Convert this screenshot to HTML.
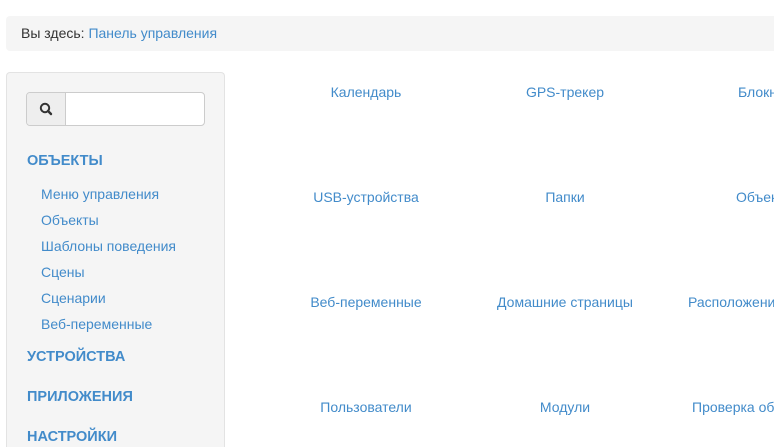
<!DOCTYPE html>
<html><head><meta charset="utf-8"><style>
html,body{margin:0;width:774px;height:447px;overflow:hidden}
body{background:#fff;font-family:"Liberation Sans",Arial,sans-serif;font-size:14px;color:#333;position:relative}
a{color:#428bca;text-decoration:none}
.bc{position:absolute;left:6px;top:16px;width:768px;height:35px;background:#f5f5f5;border-radius:4px 0 0 4px;line-height:35px;padding-left:15px;box-sizing:border-box}
.sb{position:absolute;left:6px;top:72px;width:219px;height:375px;background:#f5f5f5;border:1px solid #e3e3e3;border-bottom:none;box-sizing:border-box;border-radius:4px 4px 0 0}
.ig{position:absolute;left:26px;top:92px;width:179px;height:34px;border:1px solid #ccc;border-radius:4px;background:#fff;box-sizing:border-box}
.ig .ad{position:absolute;left:0;top:0;width:38px;height:32px;background:#eee;border-right:1px solid #ccc;border-radius:3px 0 0 3px}
.h{position:absolute;left:27px;font-weight:bold;color:#428bca;font-size:14.5px}
.s{position:absolute;left:41px;color:#428bca}
.c{position:absolute;width:200px;text-align:center;color:#428bca;white-space:nowrap}
.r{position:absolute;color:#428bca;white-space:nowrap}
</style></head><body>
<div class="bc">Вы здесь: <a>Панель управления</a></div>
<div class="sb"></div>
<div class="ig"><div class="ad"><svg width="38" height="32" viewBox="0 0 38 32"><circle cx="18" cy="15" r="4.2" fill="none" stroke="#333" stroke-width="2"/><line x1="21" y1="18" x2="24" y2="21" stroke="#333" stroke-width="2.4" stroke-linecap="round"/></svg></div></div>
<div class="h" style="top:153px">ОБЪЕКТЫ</div>
<div class="s" style="top:186px">Меню управления</div>
<div class="s" style="top:212px">Объекты</div>
<div class="s" style="top:238px">Шаблоны поведения</div>
<div class="s" style="top:264px">Сцены</div>
<div class="s" style="top:290px">Сценарии</div>
<div class="s" style="top:316px">Веб-переменные</div>
<div class="h" style="top:349px">УСТРОЙСТВА</div>
<div class="h" style="top:389px">ПРИЛОЖЕНИЯ</div>
<div class="h" style="top:429px">НАСТРОЙКИ</div>
<div class="c" style="left:266px;top:84px">Календарь</div>
<div class="c" style="left:465px;top:84px">GPS-трекер</div>
<div class="r" style="left:738px;top:84px">Блокнот</div>
<div class="c" style="left:266px;top:189px">USB-устройства</div>
<div class="c" style="left:465px;top:189px">Папки</div>
<div class="r" style="left:736px;top:189px">Объекты</div>
<div class="c" style="left:266px;top:294px">Веб-переменные</div>
<div class="c" style="left:465px;top:294px">Домашние страницы</div>
<div class="r" style="left:688px;top:294px">Расположение</div>
<div class="c" style="left:266px;top:399px">Пользователи</div>
<div class="c" style="left:465px;top:399px">Модули</div>
<div class="r" style="left:692px;top:399px">Проверка обновлений</div>
</body></html>
